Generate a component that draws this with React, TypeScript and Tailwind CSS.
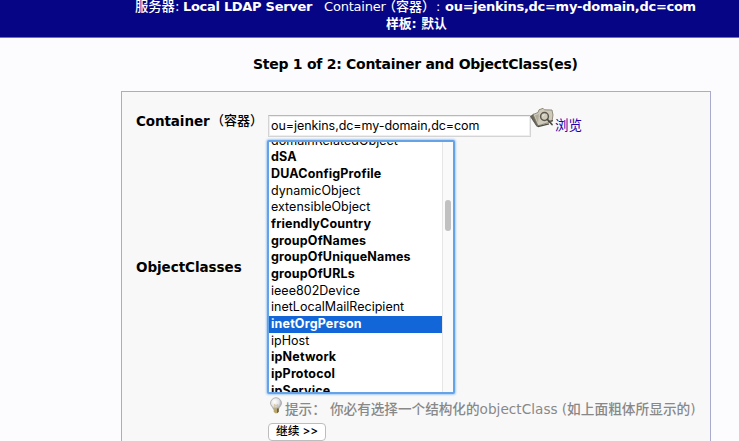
const ui = "font-['DejaVu_Sans','Noto_Sans_CJK_SC',sans-serif]";
const sys = "font-['Inter','Noto_Sans_CJK_SC',sans-serif]";

const options = [
  { name: 'domainRelatedObject', structural: false },
  { name: 'dSA', structural: true },
  { name: 'DUAConfigProfile', structural: true },
  { name: 'dynamicObject', structural: false },
  { name: 'extensibleObject', structural: false },
  { name: 'friendlyCountry', structural: true },
  { name: 'groupOfNames', structural: true },
  { name: 'groupOfUniqueNames', structural: true },
  { name: 'groupOfURLs', structural: true },
  { name: 'ieee802Device', structural: false },
  { name: 'inetLocalMailRecipient', structural: false },
  { name: 'inetOrgPerson', structural: true, selected: true },
  { name: 'ipHost', structural: false },
  { name: 'ipNetwork', structural: true },
  { name: 'ipProtocol', structural: true },
  { name: 'ipService', structural: true },
];

function BrowseIcon() {
  return (
    <svg width="25" height="22" viewBox="0 0 25 22" className="-ml-px shrink-0">
      <path d="M.5 9.500 4 7l5 11.500-2 1z" fill="#6a685c" stroke="#4c4a40" strokeWidth="0.8" />
      <path d="M3 7.500 8 5.500l1-2.700 4-1.500 1.500 1.500 7.500.2 1 5-1 6.500-14 4.300z" fill="#cfcaba" stroke="#7b786b" strokeWidth="0.8" />
      <path d="M5 8.500 9 7l-1 9z" fill="#b2ad9b" />
      <path d="M8 19.600 19 16.800" stroke="#4c4a40" strokeWidth="1.300" />
      <circle cx="14.500" cy="9.500" r="3.900" fill="#d0ccbc" stroke="#5b594e" strokeWidth="1.500" />
      <path d="M12.700 9.500q.2-1.700 1.900-1.900" fill="none" stroke="#f2f0e4" strokeWidth="0.9" />
      <path d="M17.500 12.500l4.500 5" stroke="#4c4a42" strokeWidth="1.800" strokeLinecap="round" />
      <path d="M18 14.500l5-.8" stroke="#4c4a42" strokeWidth="1.200" />
    </svg>
  );
}

function BulbIcon() {
  return (
    <svg width="14" height="17" viewBox="0 0 14 17" className="-mt-[2px] -ml-px shrink-0">
      <defs>
        <radialGradient id="glass" cx="0.38" cy="0.35" r="0.7">
          <stop offset="0" stopColor="#ffffff" />
          <stop offset="0.55" stopColor="#e4e4e6" />
          <stop offset="1" stopColor="#9c9ca2" />
        </radialGradient>
      </defs>
      <path d="M7 .7a5.600 5.600 0 0 0-5.500 5.500c0 2.400 2.300 3.600 3 6h5c.7-2.400 3-3.600 3-6A5.600 5.600 0 0 0 7 .7z" fill="url(#glass)" stroke="#a3a3a8" strokeWidth="0.8" />
      <path d="M6 11l-.5-3.500 1.500 1 1.500-1-.5 3.500" fill="none" stroke="#cbb87c" strokeWidth="0.7" />
      <path d="M4.700 11.500h5v3.300l-1.500 1.500H6.200l-1.500-1.500z" fill="#b9a76a" />
      <path d="M8 11.500h1.700v3.300l-1.500 1.500z" fill="#655c40" />
    </svg>
  );
}

export default function App() {
  return (
    <div className={`h-[441px] w-[739px] overflow-hidden bg-[#fcfcfe] text-[13px] text-black ${ui}`}>
      <header className="h-[38px] border-b border-[#777780] bg-[#050585] text-center text-white">
        <div className="flex h-[13px] items-center pl-[135px] leading-[13px] whitespace-pre">
          <span className="w-[48px] text-left text-[13.300px] font-medium">服务器:</span>
          <b className="w-[141px] text-left tracking-[-0.300px]">Local LDAP Server</b>
          <span className="w-[61px] text-left tracking-[-0.200px]">Container</span>
          <span className="w-[51px] text-left text-[13px] font-medium -indent-[2px]">（容器）</span>
          <span className="w-[9px] text-left font-medium">:</span>
          <b className="text-left tracking-[-0.280px]">ou=jenkins,dc=my-domain,dc=com</b>
        </div>
        <div className="flex h-[21px] items-center pl-[386px] text-[12.800px] font-bold">样板: 默认</div>
      </header>
      <h1 className="flex h-[53px] items-center pl-[253px] text-[14px] font-bold tracking-[-0.270px] whitespace-nowrap">
        Step 1 of 2: Container and ObjectClass(es)
      </h1>
      <main className="ml-[121px] grid h-[360px] w-[590px] grid-cols-[145px_1fr] grid-rows-[48px_255px_27px_24px] border border-[#aaaacc] bg-[#f8f8f8]">
        <label className="flex h-[29px] items-center self-start pt-[29px] pl-[14px] text-[13.500px] font-bold whitespace-nowrap">
          <span className="w-[75px] tracking-[-0.100px]">Container</span>
          <span className="text-[13px] font-medium">（容器）</span>
        </label>
        <div className="flex items-start">
          <div className={`mt-[23px] ml-px flex h-[22px] w-[263px] items-center border border-[#d4d4d4] border-t-[#b8b8b8] bg-white pl-[2px] text-[12.500px] tracking-[-0.060px] shadow-[inset_0_0_0_1px_#eeeeee] ${sys}`}>
            ou=jenkins,dc=my-domain,dc=com
          </div>
          <div className="mt-[15px]"><BrowseIcon /></div>
          <a className="mt-[24px] text-[13.500px] leading-[19px] text-[#2200aa]">浏览</a>
        </div>
        <div className="flex items-center pl-[14px] text-[13.500px] font-bold tracking-[-0.050px]">ObjectClasses</div>
        <div className="flex h-[254px] w-[188px] overflow-hidden rounded-[2px] border-2 border-[#65a3e8] bg-white shadow-[0_0_2px_1px_#a9cdf5]">
          <ul className={`-mt-[9.500px] w-[173px] shrink-0 text-[12.500px] ${sys}`}>
            {options.map((o) => (
              <li
                key={o.name}
                className={`h-[16.690px] pl-[2px] leading-[16.690px] ${o.structural ? 'font-bold tracking-[0.170px]' : 'tracking-[0.020px]'} ${o.selected ? 'bg-[#1266d8] text-white' : ''}`}
              >
                {o.name}
              </li>
            ))}
          </ul>
          <div className="flex flex-1 justify-center border-l border-[#e6e6e6] bg-[#fafafa] pt-[58px]">
            <div className="h-[31px] w-[6px] rounded-full bg-[#c1c1c1]" />
          </div>
        </div>
        <div />
        <div className="flex items-start pt-[4px] pl-[3px] text-[13.600px] leading-[20px] whitespace-nowrap text-[#888888]">
          <BulbIcon />
          <span className="ml-[2px] w-[45px] font-medium">提示：</span>
          <span className="font-medium">你必有选择一个结构化的</span>
          <span className="tracking-[0.050px]">objectClass</span>
          <span className="ml-[4px] text-[13.700px] font-medium">(如上面粗体所显示的)</span>
        </div>
        <div />
        <div className="flex pt-px pl-px">
          <button className={`flex h-[18px] w-[58px] items-center justify-center rounded-[4px] border border-[#bdbdbd] bg-white text-[11.700px] font-medium whitespace-nowrap ${sys}`}>继续 &gt;&gt;</button>
        </div>
      </main>
    </div>
  );
}
